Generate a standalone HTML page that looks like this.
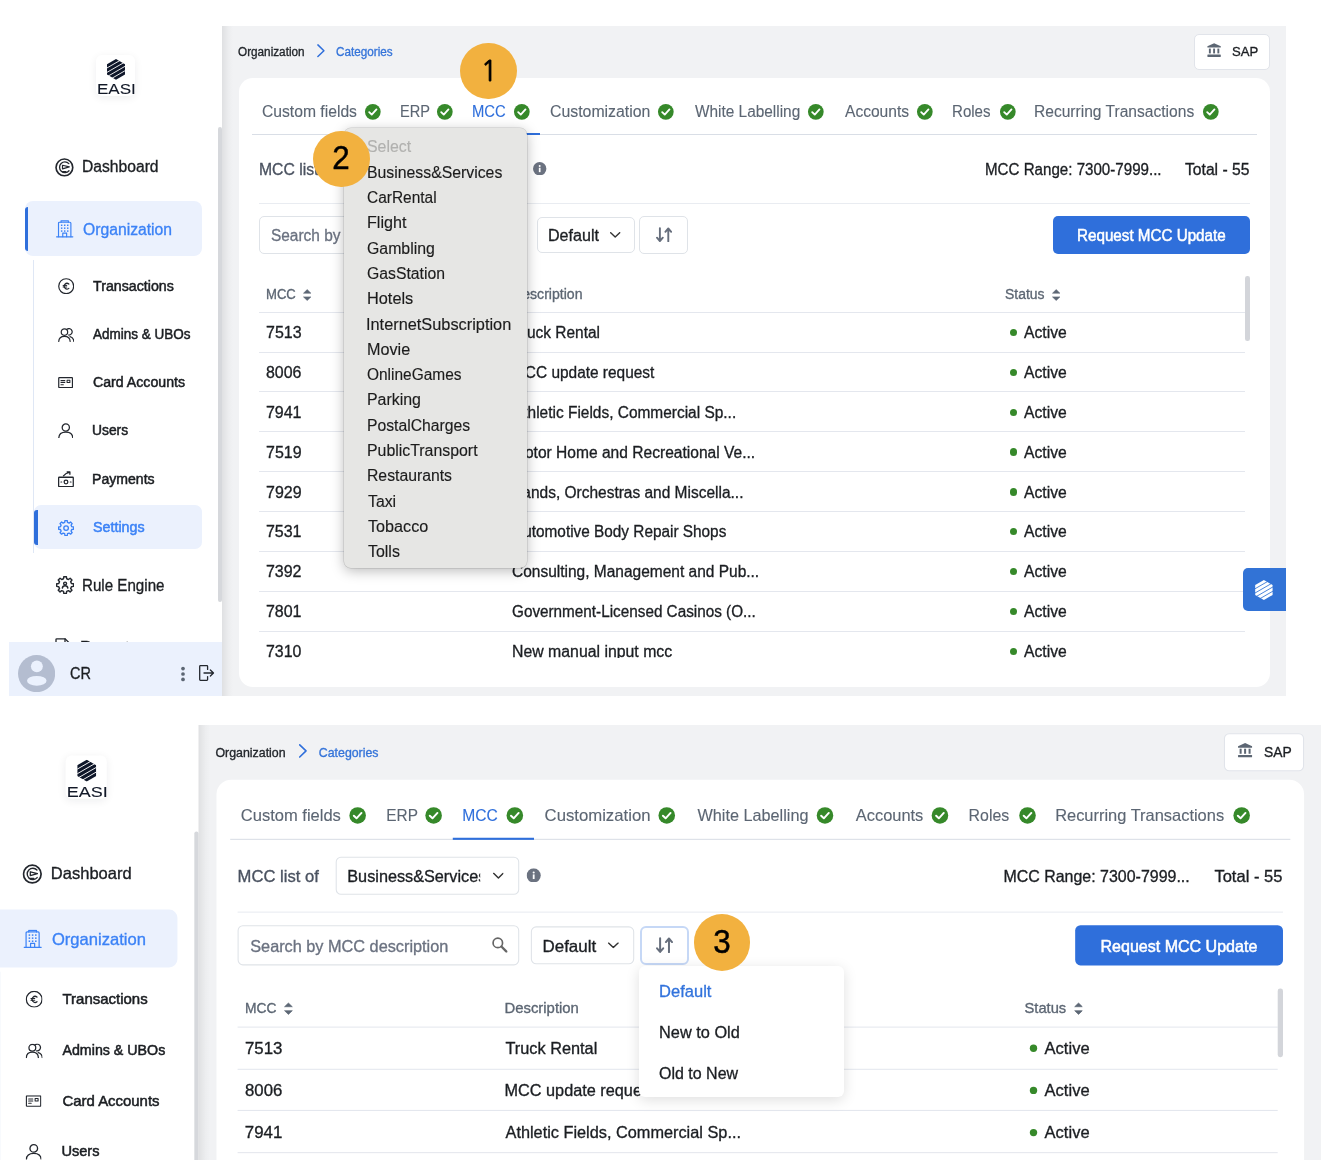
<!DOCTYPE html>
<html lang="en"><head><meta charset="utf-8"><title>MCC settings</title>
<style>
html,body{margin:0;padding:0;background:#fff;}
body{width:1324px;height:1160px;overflow:hidden;position:relative;font-family:"Liberation Sans",sans-serif;}
.b{position:absolute;display:block;}
.t{position:absolute;display:block;white-space:nowrap;transform-origin:0 50%;}
.scr{position:absolute;left:0;top:0;width:1324px;overflow:hidden;}
.in{position:absolute;left:0;top:0;width:1300px;height:700px;transform-origin:0 0;}
.scr{will-change:transform;}
</style></head><body>
<div class="scr" style="top:0;height:710px;"><div class="in">
<div class="b" style="left:222.30px;top:25.70px;width:1063.60px;height:670.00px;background:#f1f2f4;"></div>
<div class="b" style="left:222.30px;top:25.70px;width:10.70px;height:670.00px;background:linear-gradient(90deg,rgba(0,0,0,.075),rgba(0,0,0,.02) 60%,rgba(0,0,0,0));"></div>
<div class="b" style="left:217.60px;top:127.00px;width:4.20px;height:475.00px;background:#d6d8dc;border-radius:2px;"></div>
<div class="b" style="left:96.30px;top:55.00px;width:38.40px;height:41.20px;background:#fff;border-radius:6px;box-shadow:0 2px 8px rgba(15,23,42,.07);"></div>
<svg class="b" style="left:106.70px;top:58.85px;" width="18.00" height="20.70" viewBox="0 0 18 20.7"><polygon points="9,0 18,5.2 18,15.5 9,20.7 0,15.5 0,5.2" fill="#0f172a"/><line x1="-2" y1="10.11" x2="20" y2="-2.61" stroke="#fff" stroke-width="0.9"/><line x1="-2" y1="14.51" x2="20" y2="1.79" stroke="#fff" stroke-width="0.9"/><line x1="-2" y1="18.91" x2="20" y2="6.19" stroke="#fff" stroke-width="0.9"/><line x1="-2" y1="23.31" x2="20" y2="10.59" stroke="#fff" stroke-width="0.9"/></svg>
<span class="t" style="left:96.54px;top:78.77px;font-size:14px;line-height:21px;color:#111827;-webkit-text-stroke:0.1px #111827;transform:scaleX(1.2167);">EASI</span>
<span class="t" style="left:82.15px;top:155.09px;font-size:16px;line-height:24px;color:#1b1e22;-webkit-text-stroke:0.32px #1b1e22;transform:scaleX(0.9781);">Dashboard</span>
<div class="b" style="left:24.80px;top:201.20px;width:176.90px;height:54.40px;background:#ebf1fd;border-radius:8px;"></div>
<div class="b" style="left:24.80px;top:207.00px;width:3.60px;height:43.50px;background:#2f6fdb;border-radius:3px 0 0 3px;"></div>
<span class="t" style="left:83.19px;top:217.79px;font-size:16px;line-height:24px;color:#3b82f6;-webkit-text-stroke:0.32px #3b82f6;transform:scaleX(0.9820);">Organization</span>
<div class="b" style="left:33.00px;top:259.60px;width:1.40px;height:293.10px;background:#dfe7f5;"></div>
<span class="t" style="left:93.02px;top:275.97px;font-size:14px;line-height:21px;color:#1b1e22;-webkit-text-stroke:0.5px #1b1e22;transform:scaleX(1.0145);">Transactions</span>
<span class="t" style="left:93.30px;top:324.47px;font-size:14px;line-height:21px;color:#1b1e22;-webkit-text-stroke:0.5px #1b1e22;transform:scaleX(0.9636);">Admins &amp; UBOs</span>
<span class="t" style="left:92.59px;top:372.47px;font-size:14px;line-height:21px;color:#1b1e22;-webkit-text-stroke:0.5px #1b1e22;transform:scaleX(1.0106);">Card Accounts</span>
<span class="t" style="left:92.26px;top:420.07px;font-size:14px;line-height:21px;color:#1b1e22;-webkit-text-stroke:0.5px #1b1e22;transform:scaleX(0.9876);">Users</span>
<span class="t" style="left:92.17px;top:469.47px;font-size:14px;line-height:21px;color:#1b1e22;-webkit-text-stroke:0.5px #1b1e22;transform:scaleX(1.0057);">Payments</span>
<div class="b" style="left:34.40px;top:505.00px;width:167.30px;height:44.10px;background:#ebf1fd;border-radius:7px;"></div>
<div class="b" style="left:34.40px;top:509.80px;width:3.60px;height:35.00px;background:#2f6fdb;border-radius:3px 0 0 3px;"></div>
<span class="t" style="left:93.06px;top:517.47px;font-size:14px;line-height:21px;color:#3b82f6;-webkit-text-stroke:0.5px #3b82f6;transform:scaleX(1.0191);">Settings</span>
<span class="t" style="left:82.19px;top:573.59px;font-size:16px;line-height:24px;color:#1b1e22;-webkit-text-stroke:0.32px #1b1e22;transform:scaleX(0.9460);">Rule Engine</span>
<span class="t" style="left:80.48px;top:636.39px;font-size:16px;line-height:24px;color:#1b1e22;-webkit-text-stroke:0.32px #1b1e22;transform:scaleX(1.0332);">Reports</span>
<svg class="b" style="left:55.20px;top:157.80px;" width="18.80" height="18.80" viewBox="0 0 20 20"><g fill="none" stroke="#23272e" stroke-width="1.3" stroke-linecap="round" stroke-linejoin="round"><circle cx="10" cy="10" r="8.9" stroke-width="1.75"/><path d="M14.7 6.0 A5.7 5.7 0 1 0 14.9 13.6" stroke-width="1.4"/><path d="M8 7.7 L15.2 9.5 L8 11.6 Z" stroke-width="1.3"/><path d="M8 14.5 H11.6" stroke-width="1.3"/></g></svg>
<svg class="b" style="left:56.20px;top:220.40px;" width="17.40" height="17.60" viewBox="0 0 18 18"><g fill="none" stroke="#3b82f6" stroke-width="1.2" stroke-linecap="round" stroke-linejoin="round"><path d="M0.6 17.3 H17.4"/><path d="M2.6 17.2 V3.2 Q2.6 2.2 3.6 2.2 H14.4 Q15.4 2.2 15.4 3.2 V17.2"/><path d="M5.2 2.2 V0.8 H12.8 V2.2"/><path d="M7 17.2 V13.4 H11 V17.2"/></g><g fill="#3b82f6"><rect x="5.1" y="4.6" width="1.5" height="1.5"/><rect x="8.25" y="4.6" width="1.5" height="1.5"/><rect x="11.4" y="4.6" width="1.5" height="1.5"/><rect x="5.1" y="7.6" width="1.5" height="1.5"/><rect x="8.25" y="7.6" width="1.5" height="1.5"/><rect x="11.4" y="7.6" width="1.5" height="1.5"/><rect x="5.1" y="10.6" width="1.5" height="1.5"/><rect x="8.25" y="10.6" width="1.5" height="1.5"/><rect x="11.4" y="10.6" width="1.5" height="1.5"/></g></svg>
<svg class="b" style="left:57.50px;top:278.00px;" width="16.40" height="16.40" viewBox="0 0 18 18"><g fill="none" stroke="#23272e" stroke-width="1.3" stroke-linecap="round" stroke-linejoin="round"><circle cx="9" cy="9" r="8.2"/><path d="M11.9 6.6 A3.1 3.1 0 1 0 11.9 11.4" stroke-width="1.35"/><path d="M5.6 8.2 H9.6 M5.6 9.9 H9.6" stroke-width="1.05"/></g></svg>
<svg class="b" style="left:57.50px;top:327.60px;" width="16.60" height="14.20" viewBox="0 0 18 15.4"><g fill="none" stroke="#23272e" stroke-width="1.3" stroke-linecap="round" stroke-linejoin="round"><circle cx="7" cy="4.4" r="3.5"/><path d="M0.8 14.6 Q1 9 7 9 Q13 9 13.2 14.6"/><path d="M9.8 1.3 A3.5 3.5 0 1 1 11.4 7.6"/><path d="M13 9.4 Q16.9 10.4 17.2 14.6"/></g></svg>
<svg class="b" style="left:57.90px;top:376.90px;" width="15.20" height="11.20" viewBox="0 0 16 12"><g fill="none" stroke="#23272e" stroke-width="1.3" stroke-linecap="round" stroke-linejoin="round"><rect x="0.65" y="0.65" width="14.7" height="10.7" rx="0.6"/><path d="M3 3.9 H7.2 M3 6 H7.2 M3 8.2 H5.6" stroke-width="1.1"/><rect x="9.6" y="3.4" width="3" height="2.6" stroke-width="1.1"/></g></svg>
<svg class="b" style="left:57.90px;top:422.80px;" width="15.60" height="15.60" viewBox="0 0 16 16"><g fill="none" stroke="#23272e" stroke-width="1.3" stroke-linecap="round" stroke-linejoin="round"><circle cx="8" cy="4.6" r="3.7"/><path d="M0.8 15.4 Q1 9.4 8 9.4 Q15 9.4 15.2 15.4"/></g></svg>
<svg class="b" style="left:58.00px;top:471.00px;" width="16.00" height="16.40" viewBox="0 0 16.4 16.8"><g fill="none" stroke="#23272e" stroke-width="1.3" stroke-linecap="round" stroke-linejoin="round"><rect x="0.65" y="6.4" width="15" height="9.6" rx="0.6"/><circle cx="8.2" cy="11.2" r="1.9"/><path d="M3 11.2 H3.8 M12.6 11.2 H13.4" stroke-width="1.1"/><path d="M5.6 5 Q8 2 11.8 1.4 M9.4 0.8 H12.2 V3.4"/></g></svg>
<svg class="b" style="left:57.90px;top:519.70px;" width="16.20" height="16.20" viewBox="0 0 24 24"><g fill="none" stroke="#3b82f6" stroke-width="2.00" stroke-linecap="round" stroke-linejoin="round"><path d="M10.33 0.92 L13.67 0.92 L14.07 3.65 L16.44 4.63 L18.65 2.99 L21.01 5.35 L19.37 7.56 L20.35 9.93 L23.08 10.33 L23.08 13.67 L20.35 14.07 L19.37 16.44 L21.01 18.65 L18.65 21.01 L16.44 19.37 L14.07 20.35 L13.67 23.08 L10.33 23.08 L9.93 20.35 L7.56 19.37 L5.35 21.01 L2.99 18.65 L4.63 16.44 L3.65 14.07 L0.92 13.67 L0.92 10.33 L3.65 9.93 L4.63 7.56 L2.99 5.35 L5.35 2.99 L7.56 4.63 L9.93 3.65 Z"/><circle cx="12" cy="12" r="3.4"/></g></svg>
<svg class="b" style="left:55.80px;top:575.80px;" width="18.20" height="18.20" viewBox="0 0 24 24"><g fill="none" stroke="#23272e" stroke-width="1.91" stroke-linecap="round" stroke-linejoin="round"><path d="M10.33 0.92 L13.67 0.92 L14.07 3.65 L16.44 4.63 L18.65 2.99 L21.01 5.35 L19.37 7.56 L20.35 9.93 L23.08 10.33 L23.08 13.67 L20.35 14.07 L19.37 16.44 L21.01 18.65 L18.65 21.01 L16.44 19.37 L14.07 20.35 L13.67 23.08 L10.33 23.08 L9.93 20.35 L7.56 19.37 L5.35 21.01 L2.99 18.65 L4.63 16.44 L3.65 14.07 L0.92 13.67 L0.92 10.33 L3.65 9.93 L4.63 7.56 L2.99 5.35 L5.35 2.99 L7.56 4.63 L9.93 3.65 Z"/><circle cx="12" cy="10" r="1.9"/><path d="M8.4 16 Q8.6 12.9 12 12.9 Q15.4 12.9 15.6 16"/></g></svg>
<svg class="b" style="left:55.30px;top:638.30px;" width="16.00" height="18.00" viewBox="0 0 16 18"><g fill="none" stroke="#23272e" stroke-width="1.3" stroke-linecap="round" stroke-linejoin="round"><path d="M1 17 V1.6 Q1 0.8 1.8 0.8 H10 L15 5.6 V17 Z"/><path d="M10 0.8 V5.6 H15"/></g></svg>
<div class="b" style="left:9.00px;top:642.00px;width:213.30px;height:53.70px;background:#ebf1fd;"></div>
<svg class="b" style="left:17.70px;top:654.70px;" width="37.20" height="37.20" viewBox="0 0 40 40"><defs><clipPath id="avc"><circle cx="20" cy="20" r="20"/></clipPath></defs><circle cx="20" cy="20" r="20" fill="#b4bdd0"/><g clip-path="url(#avc)" fill="#ebf1fd"><circle cx="20.3" cy="12.2" r="6.4"/><ellipse cx="20.2" cy="27.8" rx="10.5" ry="5.3"/></g></svg>
<span class="t" style="left:69.97px;top:662.29px;font-size:16px;line-height:24px;color:#1b1e22;-webkit-text-stroke:0.32px #1b1e22;transform:scaleX(0.9074);">CR</span>
<svg class="b" style="left:180.50px;top:665.50px;" width="4.00" height="16.00" viewBox="0 0 4 16"><circle cx="2" cy="2.6" r="1.85" fill="#5c6673"/><circle cx="2" cy="8" r="1.85" fill="#5c6673"/><circle cx="2" cy="13.4" r="1.85" fill="#5c6673"/></svg>
<svg class="b" style="left:199.20px;top:665.40px;" width="15.40" height="16.00" viewBox="0 0 15.4 16"><g fill="none" stroke="#23272e" stroke-width="1.3" stroke-linejoin="round" stroke-linecap="round"><path d="M8.6 4.4 V1.4 Q8.6 0.7 7.9 0.7 H1.4 Q0.7 0.7 0.7 1.4 V14.6 Q0.7 15.3 1.4 15.3 H7.9 Q8.6 15.3 8.6 14.6 V11.6"/><path d="M5 8 H14.4 M11.4 5 L14.5 8 L11.4 11"/></g></svg>
<span class="t" style="left:238.47px;top:42.84px;font-size:12px;line-height:18px;color:#22262b;-webkit-text-stroke:0.32px #22262b;transform:scaleX(0.9783);">Organization</span>
<svg class="b" style="left:316.60px;top:44.20px;" width="8.00" height="13.40" viewBox="0 0 8 13.4"><path d="M0.9 0.9 L6.9 6.7 L0.9 12.5" fill="none" stroke="#2f6fdb" stroke-width="1.5" stroke-linecap="round" stroke-linejoin="round"/></svg>
<span class="t" style="left:335.71px;top:42.84px;font-size:12px;line-height:18px;color:#3574d9;-webkit-text-stroke:0.32px #3574d9;transform:scaleX(0.9754);">Categories</span>
<div class="b" style="left:1194.00px;top:34.20px;width:75.60px;height:35.60px;background:#fff;border:1px solid #e1e4ea;border-radius:5px;box-sizing:border-box;"></div>
<svg class="b" style="left:1207.00px;top:43.30px;" width="14.20" height="14.20" viewBox="0 0 14.2 14.2"><g fill="#5c6673"><path d="M7.1 0.2 L13.8 3.2 V4.6 H0.4 V3.2 Z"/><rect x="1.9" y="5.6" width="1.9" height="4.8"/><rect x="6.15" y="5.6" width="1.9" height="4.8"/><rect x="10.4" y="5.6" width="1.9" height="4.8"/><rect x="0.4" y="11.6" width="13.4" height="2.3" rx="0.4"/></g></svg>
<span class="t" style="left:1231.51px;top:42.26px;font-size:13.5px;line-height:20px;color:#1b1e22;-webkit-text-stroke:0.32px #1b1e22;transform:scaleX(0.9721);">SAP</span>
<div class="b" style="left:239.40px;top:77.70px;width:1030.90px;height:609.60px;background:#fff;border-radius:14px;"></div>
<span class="t" style="left:261.52px;top:99.99px;font-size:16px;line-height:24px;color:#5c6673;-webkit-text-stroke:0.12px #5c6673;transform:scaleX(0.9795);">Custom fields</span>
<svg class="b" style="left:364.47px;top:102.57px;" width="17.66" height="17.66" viewBox="-1 -1 18 18"><circle cx="8" cy="8" r="8" fill="#36892a"/><path d="M4.3 8.3 L6.9 10.8 L11.7 5.6" fill="none" stroke="#fff" stroke-width="1.9" stroke-linecap="round" stroke-linejoin="round"/></svg>
<span class="t" style="left:399.83px;top:99.99px;font-size:16px;line-height:24px;color:#5c6673;-webkit-text-stroke:0.12px #5c6673;transform:scaleX(0.9123);">ERP</span>
<svg class="b" style="left:436.47px;top:102.57px;" width="17.66" height="17.66" viewBox="-1 -1 18 18"><circle cx="8" cy="8" r="8" fill="#36892a"/><path d="M4.3 8.3 L6.9 10.8 L11.7 5.6" fill="none" stroke="#fff" stroke-width="1.9" stroke-linecap="round" stroke-linejoin="round"/></svg>
<span class="t" style="left:472.21px;top:99.99px;font-size:16px;line-height:24px;color:#2f6fdb;-webkit-text-stroke:0.12px #2f6fdb;transform:scaleX(0.9259);">MCC</span>
<svg class="b" style="left:513.17px;top:102.57px;" width="17.66" height="17.66" viewBox="-1 -1 18 18"><circle cx="8" cy="8" r="8" fill="#36892a"/><path d="M4.3 8.3 L6.9 10.8 L11.7 5.6" fill="none" stroke="#fff" stroke-width="1.9" stroke-linecap="round" stroke-linejoin="round"/></svg>
<span class="t" style="left:550.01px;top:99.99px;font-size:16px;line-height:24px;color:#5c6673;-webkit-text-stroke:0.12px #5c6673;transform:scaleX(0.9904);">Customization</span>
<svg class="b" style="left:657.37px;top:102.57px;" width="17.66" height="17.66" viewBox="-1 -1 18 18"><circle cx="8" cy="8" r="8" fill="#36892a"/><path d="M4.3 8.3 L6.9 10.8 L11.7 5.6" fill="none" stroke="#fff" stroke-width="1.9" stroke-linecap="round" stroke-linejoin="round"/></svg>
<span class="t" style="left:694.66px;top:99.99px;font-size:16px;line-height:24px;color:#5c6673;-webkit-text-stroke:0.12px #5c6673;transform:scaleX(0.9616);">White Labelling</span>
<svg class="b" style="left:807.17px;top:102.57px;" width="17.66" height="17.66" viewBox="-1 -1 18 18"><circle cx="8" cy="8" r="8" fill="#36892a"/><path d="M4.3 8.3 L6.9 10.8 L11.7 5.6" fill="none" stroke="#fff" stroke-width="1.9" stroke-linecap="round" stroke-linejoin="round"/></svg>
<span class="t" style="left:844.50px;top:99.99px;font-size:16px;line-height:24px;color:#5c6673;-webkit-text-stroke:0.12px #5c6673;transform:scaleX(0.9733);">Accounts</span>
<svg class="b" style="left:916.17px;top:102.57px;" width="17.66" height="17.66" viewBox="-1 -1 18 18"><circle cx="8" cy="8" r="8" fill="#36892a"/><path d="M4.3 8.3 L6.9 10.8 L11.7 5.6" fill="none" stroke="#fff" stroke-width="1.9" stroke-linecap="round" stroke-linejoin="round"/></svg>
<span class="t" style="left:952.49px;top:99.99px;font-size:16px;line-height:24px;color:#5c6673;-webkit-text-stroke:0.12px #5c6673;transform:scaleX(0.9417);">Roles</span>
<svg class="b" style="left:998.77px;top:102.57px;" width="17.66" height="17.66" viewBox="-1 -1 18 18"><circle cx="8" cy="8" r="8" fill="#36892a"/><path d="M4.3 8.3 L6.9 10.8 L11.7 5.6" fill="none" stroke="#fff" stroke-width="1.9" stroke-linecap="round" stroke-linejoin="round"/></svg>
<span class="t" style="left:1033.55px;top:99.99px;font-size:16px;line-height:24px;color:#5c6673;-webkit-text-stroke:0.12px #5c6673;transform:scaleX(0.9737);">Recurring Transactions</span>
<svg class="b" style="left:1201.67px;top:102.57px;" width="17.66" height="17.66" viewBox="-1 -1 18 18"><circle cx="8" cy="8" r="8" fill="#36892a"/><path d="M4.3 8.3 L6.9 10.8 L11.7 5.6" fill="none" stroke="#fff" stroke-width="1.9" stroke-linecap="round" stroke-linejoin="round"/></svg>
<div class="b" style="left:252.00px;top:133.50px;width:1005.30px;height:1.10px;background:#d9dee6;"></div>
<div class="b" style="left:462.70px;top:132.90px;width:77.30px;height:2.00px;background:#2f6fdb;"></div>
<span class="t" style="left:258.54px;top:157.69px;font-size:16px;line-height:24px;color:#4a5260;-webkit-text-stroke:0.32px #4a5260;transform:scaleX(0.9844);">MCC list of</span>
<div class="b" style="left:351.70px;top:151.20px;width:174.50px;height:36.10px;background:#fff;border:1px solid #dfe3e8;border-radius:5px;box-sizing:border-box;"></div>
<div class="b" style="left:361.5px;top:156px;width:127.3px;height:26px;overflow:hidden;"><span class="t" style="left:1.77px;top:1.69px;font-size:16px;line-height:24px;color:#1b1e22;-webkit-text-stroke:0.32px #1b1e22;transform:scaleX(0.9621);">Business&amp;Services</span></div>
<svg class="b" style="left:500.80px;top:166.41px;" width="10.50" height="5.78" viewBox="0 0 10.50 5.78"><path d="M0.7 0.7 L5.25 5.08 L9.80 0.7" fill="none" stroke="#333" stroke-width="1.4" stroke-linecap="round" stroke-linejoin="round"/></svg>
<svg class="b" style="left:533.20px;top:162.00px;" width="13.40" height="13.40" viewBox="0 0 14 14"><circle cx="7" cy="7" r="7" fill="#6b7280"/><rect x="6.1" y="6" width="1.8" height="4.6" fill="#fff"/><circle cx="7" cy="4.1" r="1.05" fill="#fff"/></svg>
<span class="t" style="left:984.99px;top:157.69px;font-size:16px;line-height:24px;color:#1b1e22;-webkit-text-stroke:0.32px #1b1e22;transform:scaleX(0.9454);">MCC Range: 7300-7999...</span>
<span class="t" style="left:1185.29px;top:157.69px;font-size:16px;line-height:24px;color:#1b1e22;-webkit-text-stroke:0.32px #1b1e22;transform:scaleX(0.9793);">Total - 55</span>
<div class="b" style="left:259.40px;top:203.00px;width:990.20px;height:1.00px;background:#e9ecf1;"></div>
<div class="b" style="left:259.40px;top:215.50px;width:267.10px;height:38.80px;background:#fff;border:1px solid #dfe3e8;border-radius:5px;box-sizing:border-box;"></div>
<span class="t" style="left:271.31px;top:223.79px;font-size:16px;line-height:24px;color:#6b7280;-webkit-text-stroke:0.32px #6b7280;transform:scaleX(0.9642);">Search by MCC description</span>
<svg class="b" style="left:500.00px;top:227.20px;" width="15.20" height="15.20" viewBox="0 0 15.2 15.2"><circle cx="5.7" cy="5.7" r="4.5" fill="none" stroke="#666" stroke-width="1.6"/><path d="M9.1 9.1 L13.9 13.9" stroke="#666" stroke-width="2.2" stroke-linecap="round"/></svg>
<div class="b" style="left:536.90px;top:216.80px;width:98.40px;height:36.60px;background:#fff;border:1px solid #dfe3e8;border-radius:5px;box-sizing:border-box;"></div>
<span class="t" style="left:548.11px;top:223.79px;font-size:16px;line-height:24px;color:#1b1e22;-webkit-text-stroke:0.32px #1b1e22;transform:scaleX(1.0057);">Default</span>
<svg class="b" style="left:610.20px;top:232.44px;" width="10.40" height="5.72" viewBox="0 0 10.40 5.72"><path d="M0.7 0.7 L5.20 5.02 L9.70 0.7" fill="none" stroke="#333" stroke-width="1.4" stroke-linecap="round" stroke-linejoin="round"/></svg>
<div class="b" style="left:639.30px;top:215.50px;width:48.40px;height:38.90px;background:#fff;border:1px solid #dfe3e8;border-radius:5px;box-sizing:border-box;"></div>
<svg class="b" style="left:655.90px;top:226.75px;" width="16.20" height="15.50" viewBox="0 0 16.2 15.5"><g fill="none" stroke="#666e7c" stroke-width="1.9" stroke-linecap="round" stroke-linejoin="round"><path d="M3.9 1.1 V13.4 M1.0 10.7 L3.9 14.1 L6.8 10.7"/><path d="M12.3 14.4 V2.1 M9.4 4.8 L12.3 1.4 L15.2 4.8"/></g></svg>
<div class="b" style="left:1053.00px;top:215.50px;width:196.60px;height:38.70px;background:#2f6fdb;border-radius:5px;"></div>
<span class="t" style="left:1077.18px;top:223.69px;font-size:16px;line-height:24px;color:#fff;-webkit-text-stroke:0.5px #fff;transform:scaleX(0.9498);">Request MCC Update</span>
<div class="b" style="left:0;top:0;width:1290px;height:657.5px;overflow:hidden;"><span class="t" style="left:265.85px;top:283.87px;font-size:14px;line-height:21px;color:#5c6673;-webkit-text-stroke:0.32px #5c6673;transform:scaleX(0.9358);">MCC</span>
<svg class="b" style="left:303.20px;top:289.00px;" width="8.40" height="12.00" viewBox="0 0 8.4 12"><path d="M4.2 0.6 L7.9 4.2 H0.5 Z M0.5 7.9 H7.9 L4.2 11.5 Z" fill="#5d6775" stroke="#5d6775" stroke-width="0.6" stroke-linejoin="round"/></svg>
<span class="t" style="left:511.87px;top:283.87px;font-size:14px;line-height:21px;color:#5c6673;-webkit-text-stroke:0.32px #5c6673;transform:scaleX(1.0073);">Description</span>
<span class="t" style="left:1004.97px;top:283.87px;font-size:14px;line-height:21px;color:#5c6673;-webkit-text-stroke:0.32px #5c6673;transform:scaleX(0.9956);">Status</span>
<svg class="b" style="left:1052.00px;top:289.00px;" width="8.40" height="12.00" viewBox="0 0 8.4 12"><path d="M4.2 0.6 L7.9 4.2 H0.5 Z M0.5 7.9 H7.9 L4.2 11.5 Z" fill="#5d6775" stroke="#5d6775" stroke-width="0.6" stroke-linejoin="round"/></svg>
<div class="b" style="left:259.40px;top:311.55px;width:985.30px;height:1.10px;background:#e4e7ee;"></div>
<div class="b" style="left:259.40px;top:351.65px;width:985.30px;height:1.10px;background:#e4e7ee;"></div>
<div class="b" style="left:259.40px;top:391.25px;width:985.30px;height:1.10px;background:#e4e7ee;"></div>
<div class="b" style="left:259.40px;top:431.05px;width:985.30px;height:1.10px;background:#e4e7ee;"></div>
<div class="b" style="left:259.40px;top:470.75px;width:985.30px;height:1.10px;background:#e4e7ee;"></div>
<div class="b" style="left:259.40px;top:510.95px;width:985.30px;height:1.10px;background:#e4e7ee;"></div>
<div class="b" style="left:259.40px;top:550.85px;width:985.30px;height:1.10px;background:#e4e7ee;"></div>
<div class="b" style="left:259.40px;top:590.95px;width:985.30px;height:1.10px;background:#e4e7ee;"></div>
<div class="b" style="left:259.40px;top:630.75px;width:985.30px;height:1.10px;background:#e4e7ee;"></div>
<span class="t" style="left:265.90px;top:321.19px;font-size:16px;line-height:24px;color:#1b1e22;-webkit-text-stroke:0.32px #1b1e22;transform:scaleX(0.9977);">7513</span>
<span class="t" style="left:512.69px;top:321.19px;font-size:16px;line-height:24px;color:#1b1e22;-webkit-text-stroke:0.32px #1b1e22;transform:scaleX(0.9655);">Truck Rental</span>
<div class="b" style="left:1009.50px;top:328.80px;width:7.40px;height:7.40px;background:#36892a;border-radius:50%;"></div>
<span class="t" style="left:1023.60px;top:321.19px;font-size:16px;line-height:24px;color:#1b1e22;-webkit-text-stroke:0.32px #1b1e22;transform:scaleX(0.9795);">Active</span>
<span class="t" style="left:266.02px;top:361.04px;font-size:16px;line-height:24px;color:#1b1e22;-webkit-text-stroke:0.32px #1b1e22;transform:scaleX(0.9942);">8006</span>
<span class="t" style="left:511.77px;top:361.04px;font-size:16px;line-height:24px;color:#1b1e22;-webkit-text-stroke:0.32px #1b1e22;transform:scaleX(0.9639);">MCC update request</span>
<div class="b" style="left:1009.50px;top:368.65px;width:7.40px;height:7.40px;background:#36892a;border-radius:50%;"></div>
<span class="t" style="left:1023.60px;top:361.04px;font-size:16px;line-height:24px;color:#1b1e22;-webkit-text-stroke:0.32px #1b1e22;transform:scaleX(0.9795);">Active</span>
<span class="t" style="left:265.90px;top:400.89px;font-size:16px;line-height:24px;color:#1b1e22;-webkit-text-stroke:0.32px #1b1e22;transform:scaleX(1.0000);">7941</span>
<span class="t" style="left:513.00px;top:400.89px;font-size:16px;line-height:24px;color:#1b1e22;-webkit-text-stroke:0.32px #1b1e22;transform:scaleX(0.9654);">Athletic Fields, Commercial Sp...</span>
<div class="b" style="left:1009.50px;top:408.50px;width:7.40px;height:7.40px;background:#36892a;border-radius:50%;"></div>
<span class="t" style="left:1023.60px;top:400.89px;font-size:16px;line-height:24px;color:#1b1e22;-webkit-text-stroke:0.32px #1b1e22;transform:scaleX(0.9795);">Active</span>
<span class="t" style="left:265.90px;top:440.74px;font-size:16px;line-height:24px;color:#1b1e22;-webkit-text-stroke:0.32px #1b1e22;transform:scaleX(0.9988);">7519</span>
<span class="t" style="left:511.75px;top:440.74px;font-size:16px;line-height:24px;color:#1b1e22;-webkit-text-stroke:0.32px #1b1e22;transform:scaleX(0.9729);">Motor Home and Recreational Ve...</span>
<div class="b" style="left:1009.50px;top:448.35px;width:7.40px;height:7.40px;background:#36892a;border-radius:50%;"></div>
<span class="t" style="left:1023.60px;top:440.74px;font-size:16px;line-height:24px;color:#1b1e22;-webkit-text-stroke:0.32px #1b1e22;transform:scaleX(0.9795);">Active</span>
<span class="t" style="left:265.90px;top:480.59px;font-size:16px;line-height:24px;color:#1b1e22;-webkit-text-stroke:0.32px #1b1e22;transform:scaleX(0.9988);">7929</span>
<span class="t" style="left:511.76px;top:480.59px;font-size:16px;line-height:24px;color:#1b1e22;-webkit-text-stroke:0.32px #1b1e22;transform:scaleX(0.9675);">Bands, Orchestras and Miscella...</span>
<div class="b" style="left:1009.50px;top:488.20px;width:7.40px;height:7.40px;background:#36892a;border-radius:50%;"></div>
<span class="t" style="left:1023.60px;top:480.59px;font-size:16px;line-height:24px;color:#1b1e22;-webkit-text-stroke:0.32px #1b1e22;transform:scaleX(0.9795);">Active</span>
<span class="t" style="left:265.90px;top:520.44px;font-size:16px;line-height:24px;color:#1b1e22;-webkit-text-stroke:0.32px #1b1e22;transform:scaleX(1.0000);">7531</span>
<span class="t" style="left:513.00px;top:520.44px;font-size:16px;line-height:24px;color:#1b1e22;-webkit-text-stroke:0.32px #1b1e22;transform:scaleX(0.9594);">Automotive Body Repair Shops</span>
<div class="b" style="left:1009.50px;top:528.05px;width:7.40px;height:7.40px;background:#36892a;border-radius:50%;"></div>
<span class="t" style="left:1023.60px;top:520.44px;font-size:16px;line-height:24px;color:#1b1e22;-webkit-text-stroke:0.32px #1b1e22;transform:scaleX(0.9795);">Active</span>
<span class="t" style="left:265.90px;top:560.29px;font-size:16px;line-height:24px;color:#1b1e22;-webkit-text-stroke:0.32px #1b1e22;transform:scaleX(1.0000);">7392</span>
<span class="t" style="left:512.23px;top:560.29px;font-size:16px;line-height:24px;color:#1b1e22;-webkit-text-stroke:0.32px #1b1e22;transform:scaleX(0.9682);">Consulting, Management and Pub...</span>
<div class="b" style="left:1009.50px;top:567.90px;width:7.40px;height:7.40px;background:#36892a;border-radius:50%;"></div>
<span class="t" style="left:1023.60px;top:560.29px;font-size:16px;line-height:24px;color:#1b1e22;-webkit-text-stroke:0.32px #1b1e22;transform:scaleX(0.9795);">Active</span>
<span class="t" style="left:265.90px;top:600.14px;font-size:16px;line-height:24px;color:#1b1e22;-webkit-text-stroke:0.32px #1b1e22;transform:scaleX(1.0000);">7801</span>
<span class="t" style="left:512.24px;top:600.14px;font-size:16px;line-height:24px;color:#1b1e22;-webkit-text-stroke:0.32px #1b1e22;transform:scaleX(0.9553);">Government-Licensed Casinos (O...</span>
<div class="b" style="left:1009.50px;top:607.75px;width:7.40px;height:7.40px;background:#36892a;border-radius:50%;"></div>
<span class="t" style="left:1023.60px;top:600.14px;font-size:16px;line-height:24px;color:#1b1e22;-webkit-text-stroke:0.32px #1b1e22;transform:scaleX(0.9795);">Active</span>
<span class="t" style="left:265.90px;top:639.99px;font-size:16px;line-height:24px;color:#1b1e22;-webkit-text-stroke:0.32px #1b1e22;transform:scaleX(0.9953);">7310</span>
<span class="t" style="left:511.73px;top:639.99px;font-size:16px;line-height:24px;color:#1b1e22;-webkit-text-stroke:0.32px #1b1e22;transform:scaleX(0.9896);">New manual input mcc</span>
<div class="b" style="left:1009.50px;top:647.60px;width:7.40px;height:7.40px;background:#36892a;border-radius:50%;"></div>
<span class="t" style="left:1023.60px;top:639.99px;font-size:16px;line-height:24px;color:#1b1e22;-webkit-text-stroke:0.32px #1b1e22;transform:scaleX(0.9795);">Active</span>
<div class="b" style="left:1245.00px;top:276.00px;width:4.60px;height:65.00px;background:#d3d5da;border-radius:2.3px;"></div></div>
<div class="b" style="left:1242.90px;top:567.90px;width:43.00px;height:42.90px;background:#3273d6;border-radius:5px 0 0 5px;"></div>
<svg class="b" style="left:1255.20px;top:579.60px;" width="17.80" height="20.00" viewBox="0 0 18 20.7"><polygon points="9,0 18,5.2 18,15.5 9,20.7 0,15.5 0,5.2" fill="#fff"/><line x1="-2" y1="10.11" x2="20" y2="-2.61" stroke="#3273d6" stroke-width="0.9"/><line x1="-2" y1="14.51" x2="20" y2="1.79" stroke="#3273d6" stroke-width="0.9"/><line x1="-2" y1="18.91" x2="20" y2="6.19" stroke="#3273d6" stroke-width="0.9"/><line x1="-2" y1="23.31" x2="20" y2="10.59" stroke="#3273d6" stroke-width="0.9"/></svg>
</div>
<div class="b" style="left:344.00px;top:127.60px;width:183.30px;height:440.00px;background:#e6e6e4;border-radius:7px;box-shadow:0 0 0 0.5px rgba(0,0,0,.16),0 3px 13px rgba(0,0,0,.27);"></div>
<span class="t" style="left:367.18px;top:135.49px;font-size:16px;line-height:24px;color:#b1b1af;-webkit-text-stroke:0.15px #b1b1af;transform:scaleX(0.9936);">Select</span>
<span class="t" style="left:366.64px;top:160.78px;font-size:16px;line-height:24px;color:#1c1c1c;-webkit-text-stroke:0.15px #1c1c1c;transform:scaleX(0.9880);">Business&amp;Services</span>
<span class="t" style="left:367.13px;top:186.07px;font-size:16px;line-height:24px;color:#1c1c1c;-webkit-text-stroke:0.15px #1c1c1c;transform:scaleX(0.9672);">CarRental</span>
<span class="t" style="left:366.61px;top:211.36px;font-size:16px;line-height:24px;color:#1c1c1c;-webkit-text-stroke:0.15px #1c1c1c;transform:scaleX(1.0090);">Flight</span>
<span class="t" style="left:367.11px;top:236.65px;font-size:16px;line-height:24px;color:#1c1c1c;-webkit-text-stroke:0.15px #1c1c1c;transform:scaleX(0.9898);">Gambling</span>
<span class="t" style="left:367.11px;top:261.94px;font-size:16px;line-height:24px;color:#1c1c1c;-webkit-text-stroke:0.15px #1c1c1c;transform:scaleX(0.9850);">GasStation</span>
<span class="t" style="left:366.59px;top:287.23px;font-size:16px;line-height:24px;color:#1c1c1c;-webkit-text-stroke:0.15px #1c1c1c;transform:scaleX(1.0202);">Hotels</span>
<span class="t" style="left:366.43px;top:312.52px;font-size:16px;line-height:24px;color:#1c1c1c;-webkit-text-stroke:0.15px #1c1c1c;transform:scaleX(1.0205);">InternetSubscription</span>
<span class="t" style="left:366.60px;top:337.81px;font-size:16px;line-height:24px;color:#1c1c1c;-webkit-text-stroke:0.15px #1c1c1c;transform:scaleX(1.0118);">Movie</span>
<span class="t" style="left:367.20px;top:363.10px;font-size:16px;line-height:24px;color:#1c1c1c;-webkit-text-stroke:0.15px #1c1c1c;transform:scaleX(0.9662);">OnlineGames</span>
<span class="t" style="left:366.63px;top:388.39px;font-size:16px;line-height:24px;color:#1c1c1c;-webkit-text-stroke:0.15px #1c1c1c;transform:scaleX(0.9950);">Parking</span>
<span class="t" style="left:366.64px;top:413.68px;font-size:16px;line-height:24px;color:#1c1c1c;-webkit-text-stroke:0.15px #1c1c1c;transform:scaleX(0.9824);">PostalCharges</span>
<span class="t" style="left:366.63px;top:438.97px;font-size:16px;line-height:24px;color:#1c1c1c;-webkit-text-stroke:0.15px #1c1c1c;transform:scaleX(0.9920);">PublicTransport</span>
<span class="t" style="left:366.64px;top:464.26px;font-size:16px;line-height:24px;color:#1c1c1c;-webkit-text-stroke:0.15px #1c1c1c;transform:scaleX(0.9841);">Restaurants</span>
<span class="t" style="left:367.58px;top:489.55px;font-size:16px;line-height:24px;color:#1c1c1c;-webkit-text-stroke:0.15px #1c1c1c;transform:scaleX(0.9874);">Taxi</span>
<span class="t" style="left:367.58px;top:514.84px;font-size:16px;line-height:24px;color:#1c1c1c;-webkit-text-stroke:0.15px #1c1c1c;transform:scaleX(1.0102);">Tobacco</span>
<span class="t" style="left:367.58px;top:540.13px;font-size:16px;line-height:24px;color:#1c1c1c;-webkit-text-stroke:0.15px #1c1c1c;transform:scaleX(0.9961);">Tolls</span>
<div class="b" style="left:460.40px;top:43.00px;width:56.20px;height:56.20px;background:#f2b13f;border-radius:50%;"></div><span class="t" style="left:461.00px;top:43.40px;width:56.2px;text-align:center;font-size:27.8px;line-height:56.2px;color:#000;transform-origin:50% 50%;transform:scaleX(1.0);font-family:'NanumGothic','Liberation Sans',sans-serif;-webkit-text-stroke:0.8px #000;">1</span>
<div class="b" style="left:313.40px;top:130.60px;width:56.20px;height:56.20px;background:#f2b13f;border-radius:50%;"></div><span class="t" style="left:313.40px;top:129.70px;width:56.2px;text-align:center;font-size:33px;line-height:56.2px;color:#000;transform-origin:50% 50%;transform:scaleX(0.95);-webkit-text-stroke:0.45px #000;">2</span>
</div>
<div class="scr" style="top:725px;height:435px;"><div style="position:absolute;left:0;top:-725px;width:1324px;height:1160px;">
<div class="in" style="transform:translate(-35.64px,697.45px) scale(1.0549);">
<div class="b" style="left:222.30px;top:25.70px;width:1063.60px;height:670.00px;background:#f1f2f4;"></div>
<div class="b" style="left:222.30px;top:25.70px;width:10.70px;height:670.00px;background:linear-gradient(90deg,rgba(0,0,0,.075),rgba(0,0,0,.02) 60%,rgba(0,0,0,0));"></div>
<div class="b" style="left:217.60px;top:127.00px;width:4.20px;height:475.00px;background:#d6d8dc;border-radius:2px;"></div>
<div class="b" style="left:96.30px;top:55.00px;width:38.40px;height:41.20px;background:#fff;border-radius:6px;box-shadow:0 2px 8px rgba(15,23,42,.07);"></div>
<svg class="b" style="left:106.70px;top:58.85px;" width="18.00" height="20.70" viewBox="0 0 18 20.7"><polygon points="9,0 18,5.2 18,15.5 9,20.7 0,15.5 0,5.2" fill="#0f172a"/><line x1="-2" y1="10.11" x2="20" y2="-2.61" stroke="#fff" stroke-width="0.9"/><line x1="-2" y1="14.51" x2="20" y2="1.79" stroke="#fff" stroke-width="0.9"/><line x1="-2" y1="18.91" x2="20" y2="6.19" stroke="#fff" stroke-width="0.9"/><line x1="-2" y1="23.31" x2="20" y2="10.59" stroke="#fff" stroke-width="0.9"/></svg>
<span class="t" style="left:96.54px;top:78.77px;font-size:14px;line-height:21px;color:#111827;-webkit-text-stroke:0.1px #111827;transform:scaleX(1.2167);">EASI</span>
<span class="t" style="left:82.15px;top:155.09px;font-size:16px;line-height:24px;color:#1b1e22;-webkit-text-stroke:0.32px #1b1e22;transform:scaleX(0.9781);">Dashboard</span>
<div class="b" style="left:24.80px;top:201.20px;width:176.90px;height:54.40px;background:#ebf1fd;border-radius:8px;"></div>
<div class="b" style="left:24.80px;top:207.00px;width:3.60px;height:43.50px;background:#2f6fdb;border-radius:3px 0 0 3px;"></div>
<span class="t" style="left:83.19px;top:217.79px;font-size:16px;line-height:24px;color:#3b82f6;-webkit-text-stroke:0.32px #3b82f6;transform:scaleX(0.9820);">Organization</span>
<div class="b" style="left:33.00px;top:259.60px;width:1.40px;height:293.10px;background:#dfe7f5;"></div>
<span class="t" style="left:93.02px;top:275.97px;font-size:14px;line-height:21px;color:#1b1e22;-webkit-text-stroke:0.5px #1b1e22;transform:scaleX(1.0145);">Transactions</span>
<span class="t" style="left:93.30px;top:324.47px;font-size:14px;line-height:21px;color:#1b1e22;-webkit-text-stroke:0.5px #1b1e22;transform:scaleX(0.9636);">Admins &amp; UBOs</span>
<span class="t" style="left:92.59px;top:372.47px;font-size:14px;line-height:21px;color:#1b1e22;-webkit-text-stroke:0.5px #1b1e22;transform:scaleX(1.0106);">Card Accounts</span>
<span class="t" style="left:92.26px;top:420.07px;font-size:14px;line-height:21px;color:#1b1e22;-webkit-text-stroke:0.5px #1b1e22;transform:scaleX(0.9876);">Users</span>
<span class="t" style="left:92.17px;top:469.47px;font-size:14px;line-height:21px;color:#1b1e22;-webkit-text-stroke:0.5px #1b1e22;transform:scaleX(1.0057);">Payments</span>
<div class="b" style="left:34.40px;top:505.00px;width:167.30px;height:44.10px;background:#ebf1fd;border-radius:7px;"></div>
<div class="b" style="left:34.40px;top:509.80px;width:3.60px;height:35.00px;background:#2f6fdb;border-radius:3px 0 0 3px;"></div>
<span class="t" style="left:93.06px;top:517.47px;font-size:14px;line-height:21px;color:#3b82f6;-webkit-text-stroke:0.5px #3b82f6;transform:scaleX(1.0191);">Settings</span>
<span class="t" style="left:82.19px;top:573.59px;font-size:16px;line-height:24px;color:#1b1e22;-webkit-text-stroke:0.32px #1b1e22;transform:scaleX(0.9460);">Rule Engine</span>
<span class="t" style="left:80.48px;top:636.39px;font-size:16px;line-height:24px;color:#1b1e22;-webkit-text-stroke:0.32px #1b1e22;transform:scaleX(1.0332);">Reports</span>
<svg class="b" style="left:55.20px;top:157.80px;" width="18.80" height="18.80" viewBox="0 0 20 20"><g fill="none" stroke="#23272e" stroke-width="1.3" stroke-linecap="round" stroke-linejoin="round"><circle cx="10" cy="10" r="8.9" stroke-width="1.75"/><path d="M14.7 6.0 A5.7 5.7 0 1 0 14.9 13.6" stroke-width="1.4"/><path d="M8 7.7 L15.2 9.5 L8 11.6 Z" stroke-width="1.3"/><path d="M8 14.5 H11.6" stroke-width="1.3"/></g></svg>
<svg class="b" style="left:56.20px;top:220.40px;" width="17.40" height="17.60" viewBox="0 0 18 18"><g fill="none" stroke="#3b82f6" stroke-width="1.2" stroke-linecap="round" stroke-linejoin="round"><path d="M0.6 17.3 H17.4"/><path d="M2.6 17.2 V3.2 Q2.6 2.2 3.6 2.2 H14.4 Q15.4 2.2 15.4 3.2 V17.2"/><path d="M5.2 2.2 V0.8 H12.8 V2.2"/><path d="M7 17.2 V13.4 H11 V17.2"/></g><g fill="#3b82f6"><rect x="5.1" y="4.6" width="1.5" height="1.5"/><rect x="8.25" y="4.6" width="1.5" height="1.5"/><rect x="11.4" y="4.6" width="1.5" height="1.5"/><rect x="5.1" y="7.6" width="1.5" height="1.5"/><rect x="8.25" y="7.6" width="1.5" height="1.5"/><rect x="11.4" y="7.6" width="1.5" height="1.5"/><rect x="5.1" y="10.6" width="1.5" height="1.5"/><rect x="8.25" y="10.6" width="1.5" height="1.5"/><rect x="11.4" y="10.6" width="1.5" height="1.5"/></g></svg>
<svg class="b" style="left:57.50px;top:278.00px;" width="16.40" height="16.40" viewBox="0 0 18 18"><g fill="none" stroke="#23272e" stroke-width="1.3" stroke-linecap="round" stroke-linejoin="round"><circle cx="9" cy="9" r="8.2"/><path d="M11.9 6.6 A3.1 3.1 0 1 0 11.9 11.4" stroke-width="1.35"/><path d="M5.6 8.2 H9.6 M5.6 9.9 H9.6" stroke-width="1.05"/></g></svg>
<svg class="b" style="left:57.50px;top:327.60px;" width="16.60" height="14.20" viewBox="0 0 18 15.4"><g fill="none" stroke="#23272e" stroke-width="1.3" stroke-linecap="round" stroke-linejoin="round"><circle cx="7" cy="4.4" r="3.5"/><path d="M0.8 14.6 Q1 9 7 9 Q13 9 13.2 14.6"/><path d="M9.8 1.3 A3.5 3.5 0 1 1 11.4 7.6"/><path d="M13 9.4 Q16.9 10.4 17.2 14.6"/></g></svg>
<svg class="b" style="left:57.90px;top:376.90px;" width="15.20" height="11.20" viewBox="0 0 16 12"><g fill="none" stroke="#23272e" stroke-width="1.3" stroke-linecap="round" stroke-linejoin="round"><rect x="0.65" y="0.65" width="14.7" height="10.7" rx="0.6"/><path d="M3 3.9 H7.2 M3 6 H7.2 M3 8.2 H5.6" stroke-width="1.1"/><rect x="9.6" y="3.4" width="3" height="2.6" stroke-width="1.1"/></g></svg>
<svg class="b" style="left:57.90px;top:422.80px;" width="15.60" height="15.60" viewBox="0 0 16 16"><g fill="none" stroke="#23272e" stroke-width="1.3" stroke-linecap="round" stroke-linejoin="round"><circle cx="8" cy="4.6" r="3.7"/><path d="M0.8 15.4 Q1 9.4 8 9.4 Q15 9.4 15.2 15.4"/></g></svg>
<svg class="b" style="left:58.00px;top:471.00px;" width="16.00" height="16.40" viewBox="0 0 16.4 16.8"><g fill="none" stroke="#23272e" stroke-width="1.3" stroke-linecap="round" stroke-linejoin="round"><rect x="0.65" y="6.4" width="15" height="9.6" rx="0.6"/><circle cx="8.2" cy="11.2" r="1.9"/><path d="M3 11.2 H3.8 M12.6 11.2 H13.4" stroke-width="1.1"/><path d="M5.6 5 Q8 2 11.8 1.4 M9.4 0.8 H12.2 V3.4"/></g></svg>
<svg class="b" style="left:57.90px;top:519.70px;" width="16.20" height="16.20" viewBox="0 0 24 24"><g fill="none" stroke="#3b82f6" stroke-width="2.00" stroke-linecap="round" stroke-linejoin="round"><path d="M10.33 0.92 L13.67 0.92 L14.07 3.65 L16.44 4.63 L18.65 2.99 L21.01 5.35 L19.37 7.56 L20.35 9.93 L23.08 10.33 L23.08 13.67 L20.35 14.07 L19.37 16.44 L21.01 18.65 L18.65 21.01 L16.44 19.37 L14.07 20.35 L13.67 23.08 L10.33 23.08 L9.93 20.35 L7.56 19.37 L5.35 21.01 L2.99 18.65 L4.63 16.44 L3.65 14.07 L0.92 13.67 L0.92 10.33 L3.65 9.93 L4.63 7.56 L2.99 5.35 L5.35 2.99 L7.56 4.63 L9.93 3.65 Z"/><circle cx="12" cy="12" r="3.4"/></g></svg>
<svg class="b" style="left:55.80px;top:575.80px;" width="18.20" height="18.20" viewBox="0 0 24 24"><g fill="none" stroke="#23272e" stroke-width="1.91" stroke-linecap="round" stroke-linejoin="round"><path d="M10.33 0.92 L13.67 0.92 L14.07 3.65 L16.44 4.63 L18.65 2.99 L21.01 5.35 L19.37 7.56 L20.35 9.93 L23.08 10.33 L23.08 13.67 L20.35 14.07 L19.37 16.44 L21.01 18.65 L18.65 21.01 L16.44 19.37 L14.07 20.35 L13.67 23.08 L10.33 23.08 L9.93 20.35 L7.56 19.37 L5.35 21.01 L2.99 18.65 L4.63 16.44 L3.65 14.07 L0.92 13.67 L0.92 10.33 L3.65 9.93 L4.63 7.56 L2.99 5.35 L5.35 2.99 L7.56 4.63 L9.93 3.65 Z"/><circle cx="12" cy="10" r="1.9"/><path d="M8.4 16 Q8.6 12.9 12 12.9 Q15.4 12.9 15.6 16"/></g></svg>
<svg class="b" style="left:55.30px;top:638.30px;" width="16.00" height="18.00" viewBox="0 0 16 18"><g fill="none" stroke="#23272e" stroke-width="1.3" stroke-linecap="round" stroke-linejoin="round"><path d="M1 17 V1.6 Q1 0.8 1.8 0.8 H10 L15 5.6 V17 Z"/><path d="M10 0.8 V5.6 H15"/></g></svg>
<div class="b" style="left:9.00px;top:642.00px;width:213.30px;height:53.70px;background:#ebf1fd;"></div>
<svg class="b" style="left:17.70px;top:654.70px;" width="37.20" height="37.20" viewBox="0 0 40 40"><defs><clipPath id="avc2"><circle cx="20" cy="20" r="20"/></clipPath></defs><circle cx="20" cy="20" r="20" fill="#b4bdd0"/><g clip-path="url(#avc2)" fill="#ebf1fd"><circle cx="20.3" cy="12.2" r="6.4"/><ellipse cx="20.2" cy="27.8" rx="10.5" ry="5.3"/></g></svg>
<span class="t" style="left:69.97px;top:662.29px;font-size:16px;line-height:24px;color:#1b1e22;-webkit-text-stroke:0.32px #1b1e22;transform:scaleX(0.9074);">CR</span>
<svg class="b" style="left:180.50px;top:665.50px;" width="4.00" height="16.00" viewBox="0 0 4 16"><circle cx="2" cy="2.6" r="1.85" fill="#5c6673"/><circle cx="2" cy="8" r="1.85" fill="#5c6673"/><circle cx="2" cy="13.4" r="1.85" fill="#5c6673"/></svg>
<svg class="b" style="left:199.20px;top:665.40px;" width="15.40" height="16.00" viewBox="0 0 15.4 16"><g fill="none" stroke="#23272e" stroke-width="1.3" stroke-linejoin="round" stroke-linecap="round"><path d="M8.6 4.4 V1.4 Q8.6 0.7 7.9 0.7 H1.4 Q0.7 0.7 0.7 1.4 V14.6 Q0.7 15.3 1.4 15.3 H7.9 Q8.6 15.3 8.6 14.6 V11.6"/><path d="M5 8 H14.4 M11.4 5 L14.5 8 L11.4 11"/></g></svg>
<span class="t" style="left:238.47px;top:42.84px;font-size:12px;line-height:18px;color:#22262b;-webkit-text-stroke:0.32px #22262b;transform:scaleX(0.9783);">Organization</span>
<svg class="b" style="left:316.60px;top:44.20px;" width="8.00" height="13.40" viewBox="0 0 8 13.4"><path d="M0.9 0.9 L6.9 6.7 L0.9 12.5" fill="none" stroke="#2f6fdb" stroke-width="1.5" stroke-linecap="round" stroke-linejoin="round"/></svg>
<span class="t" style="left:335.71px;top:42.84px;font-size:12px;line-height:18px;color:#3574d9;-webkit-text-stroke:0.32px #3574d9;transform:scaleX(0.9754);">Categories</span>
<div class="b" style="left:1194.00px;top:34.20px;width:75.60px;height:35.60px;background:#fff;border:1px solid #e1e4ea;border-radius:5px;box-sizing:border-box;"></div>
<svg class="b" style="left:1207.00px;top:43.30px;" width="14.20" height="14.20" viewBox="0 0 14.2 14.2"><g fill="#5c6673"><path d="M7.1 0.2 L13.8 3.2 V4.6 H0.4 V3.2 Z"/><rect x="1.9" y="5.6" width="1.9" height="4.8"/><rect x="6.15" y="5.6" width="1.9" height="4.8"/><rect x="10.4" y="5.6" width="1.9" height="4.8"/><rect x="0.4" y="11.6" width="13.4" height="2.3" rx="0.4"/></g></svg>
<span class="t" style="left:1231.51px;top:42.26px;font-size:13.5px;line-height:20px;color:#1b1e22;-webkit-text-stroke:0.32px #1b1e22;transform:scaleX(0.9721);">SAP</span>
<div class="b" style="left:239.40px;top:77.70px;width:1030.90px;height:609.60px;background:#fff;border-radius:14px;"></div>
<span class="t" style="left:261.52px;top:99.99px;font-size:16px;line-height:24px;color:#5c6673;-webkit-text-stroke:0.12px #5c6673;transform:scaleX(0.9795);">Custom fields</span>
<svg class="b" style="left:364.47px;top:102.57px;" width="17.66" height="17.66" viewBox="-1 -1 18 18"><circle cx="8" cy="8" r="8" fill="#36892a"/><path d="M4.3 8.3 L6.9 10.8 L11.7 5.6" fill="none" stroke="#fff" stroke-width="1.9" stroke-linecap="round" stroke-linejoin="round"/></svg>
<span class="t" style="left:399.83px;top:99.99px;font-size:16px;line-height:24px;color:#5c6673;-webkit-text-stroke:0.12px #5c6673;transform:scaleX(0.9123);">ERP</span>
<svg class="b" style="left:436.47px;top:102.57px;" width="17.66" height="17.66" viewBox="-1 -1 18 18"><circle cx="8" cy="8" r="8" fill="#36892a"/><path d="M4.3 8.3 L6.9 10.8 L11.7 5.6" fill="none" stroke="#fff" stroke-width="1.9" stroke-linecap="round" stroke-linejoin="round"/></svg>
<span class="t" style="left:472.21px;top:99.99px;font-size:16px;line-height:24px;color:#2f6fdb;-webkit-text-stroke:0.12px #2f6fdb;transform:scaleX(0.9259);">MCC</span>
<svg class="b" style="left:513.17px;top:102.57px;" width="17.66" height="17.66" viewBox="-1 -1 18 18"><circle cx="8" cy="8" r="8" fill="#36892a"/><path d="M4.3 8.3 L6.9 10.8 L11.7 5.6" fill="none" stroke="#fff" stroke-width="1.9" stroke-linecap="round" stroke-linejoin="round"/></svg>
<span class="t" style="left:550.01px;top:99.99px;font-size:16px;line-height:24px;color:#5c6673;-webkit-text-stroke:0.12px #5c6673;transform:scaleX(0.9904);">Customization</span>
<svg class="b" style="left:657.37px;top:102.57px;" width="17.66" height="17.66" viewBox="-1 -1 18 18"><circle cx="8" cy="8" r="8" fill="#36892a"/><path d="M4.3 8.3 L6.9 10.8 L11.7 5.6" fill="none" stroke="#fff" stroke-width="1.9" stroke-linecap="round" stroke-linejoin="round"/></svg>
<span class="t" style="left:694.66px;top:99.99px;font-size:16px;line-height:24px;color:#5c6673;-webkit-text-stroke:0.12px #5c6673;transform:scaleX(0.9616);">White Labelling</span>
<svg class="b" style="left:807.17px;top:102.57px;" width="17.66" height="17.66" viewBox="-1 -1 18 18"><circle cx="8" cy="8" r="8" fill="#36892a"/><path d="M4.3 8.3 L6.9 10.8 L11.7 5.6" fill="none" stroke="#fff" stroke-width="1.9" stroke-linecap="round" stroke-linejoin="round"/></svg>
<span class="t" style="left:844.50px;top:99.99px;font-size:16px;line-height:24px;color:#5c6673;-webkit-text-stroke:0.12px #5c6673;transform:scaleX(0.9733);">Accounts</span>
<svg class="b" style="left:916.17px;top:102.57px;" width="17.66" height="17.66" viewBox="-1 -1 18 18"><circle cx="8" cy="8" r="8" fill="#36892a"/><path d="M4.3 8.3 L6.9 10.8 L11.7 5.6" fill="none" stroke="#fff" stroke-width="1.9" stroke-linecap="round" stroke-linejoin="round"/></svg>
<span class="t" style="left:952.49px;top:99.99px;font-size:16px;line-height:24px;color:#5c6673;-webkit-text-stroke:0.12px #5c6673;transform:scaleX(0.9417);">Roles</span>
<svg class="b" style="left:998.77px;top:102.57px;" width="17.66" height="17.66" viewBox="-1 -1 18 18"><circle cx="8" cy="8" r="8" fill="#36892a"/><path d="M4.3 8.3 L6.9 10.8 L11.7 5.6" fill="none" stroke="#fff" stroke-width="1.9" stroke-linecap="round" stroke-linejoin="round"/></svg>
<span class="t" style="left:1033.55px;top:99.99px;font-size:16px;line-height:24px;color:#5c6673;-webkit-text-stroke:0.12px #5c6673;transform:scaleX(0.9737);">Recurring Transactions</span>
<svg class="b" style="left:1201.67px;top:102.57px;" width="17.66" height="17.66" viewBox="-1 -1 18 18"><circle cx="8" cy="8" r="8" fill="#36892a"/><path d="M4.3 8.3 L6.9 10.8 L11.7 5.6" fill="none" stroke="#fff" stroke-width="1.9" stroke-linecap="round" stroke-linejoin="round"/></svg>
<div class="b" style="left:252.00px;top:133.50px;width:1005.30px;height:1.10px;background:#d9dee6;"></div>
<div class="b" style="left:462.70px;top:132.90px;width:77.30px;height:2.00px;background:#2f6fdb;"></div>
<span class="t" style="left:258.54px;top:157.69px;font-size:16px;line-height:24px;color:#4a5260;-webkit-text-stroke:0.32px #4a5260;transform:scaleX(0.9844);">MCC list of</span>
<div class="b" style="left:351.70px;top:151.20px;width:174.50px;height:36.10px;background:#fff;border:1px solid #dfe3e8;border-radius:5px;box-sizing:border-box;"></div>
<div class="b" style="left:361.5px;top:156px;width:127.3px;height:26px;overflow:hidden;"><span class="t" style="left:1.77px;top:1.69px;font-size:16px;line-height:24px;color:#1b1e22;-webkit-text-stroke:0.32px #1b1e22;transform:scaleX(0.9621);">Business&amp;Services</span></div>
<svg class="b" style="left:500.80px;top:166.41px;" width="10.50" height="5.78" viewBox="0 0 10.50 5.78"><path d="M0.7 0.7 L5.25 5.08 L9.80 0.7" fill="none" stroke="#333" stroke-width="1.4" stroke-linecap="round" stroke-linejoin="round"/></svg>
<svg class="b" style="left:533.20px;top:162.00px;" width="13.40" height="13.40" viewBox="0 0 14 14"><circle cx="7" cy="7" r="7" fill="#6b7280"/><rect x="6.1" y="6" width="1.8" height="4.6" fill="#fff"/><circle cx="7" cy="4.1" r="1.05" fill="#fff"/></svg>
<span class="t" style="left:984.99px;top:157.69px;font-size:16px;line-height:24px;color:#1b1e22;-webkit-text-stroke:0.32px #1b1e22;transform:scaleX(0.9454);">MCC Range: 7300-7999...</span>
<span class="t" style="left:1185.29px;top:157.69px;font-size:16px;line-height:24px;color:#1b1e22;-webkit-text-stroke:0.32px #1b1e22;transform:scaleX(0.9793);">Total - 55</span>
<div class="b" style="left:259.40px;top:203.00px;width:990.20px;height:1.00px;background:#e9ecf1;"></div>
<div class="b" style="left:259.40px;top:215.50px;width:267.10px;height:38.80px;background:#fff;border:1px solid #dfe3e8;border-radius:5px;box-sizing:border-box;"></div>
<span class="t" style="left:271.31px;top:223.79px;font-size:16px;line-height:24px;color:#6b7280;-webkit-text-stroke:0.32px #6b7280;transform:scaleX(0.9642);">Search by MCC description</span>
<svg class="b" style="left:500.00px;top:227.20px;" width="15.20" height="15.20" viewBox="0 0 15.2 15.2"><circle cx="5.7" cy="5.7" r="4.5" fill="none" stroke="#666" stroke-width="1.6"/><path d="M9.1 9.1 L13.9 13.9" stroke="#666" stroke-width="2.2" stroke-linecap="round"/></svg>
<div class="b" style="left:536.90px;top:216.80px;width:98.40px;height:36.60px;background:#fff;border:1px solid #dfe3e8;border-radius:5px;box-sizing:border-box;"></div>
<span class="t" style="left:548.11px;top:223.79px;font-size:16px;line-height:24px;color:#1b1e22;-webkit-text-stroke:0.32px #1b1e22;transform:scaleX(1.0057);">Default</span>
<svg class="b" style="left:610.20px;top:232.44px;" width="10.40" height="5.72" viewBox="0 0 10.40 5.72"><path d="M0.7 0.7 L5.20 5.02 L9.70 0.7" fill="none" stroke="#333" stroke-width="1.4" stroke-linecap="round" stroke-linejoin="round"/></svg>
<div class="b" style="left:639.30px;top:215.50px;width:48.40px;height:38.90px;background:#fff;border:1px solid #dfe3e8;border-radius:5px;box-sizing:border-box;"></div>
<svg class="b" style="left:655.90px;top:226.75px;" width="16.20" height="15.50" viewBox="0 0 16.2 15.5"><g fill="none" stroke="#666e7c" stroke-width="1.9" stroke-linecap="round" stroke-linejoin="round"><path d="M3.9 1.1 V13.4 M1.0 10.7 L3.9 14.1 L6.8 10.7"/><path d="M12.3 14.4 V2.1 M9.4 4.8 L12.3 1.4 L15.2 4.8"/></g></svg>
<div class="b" style="left:1053.00px;top:215.50px;width:196.60px;height:38.70px;background:#2f6fdb;border-radius:5px;"></div>
<span class="t" style="left:1077.18px;top:223.69px;font-size:16px;line-height:24px;color:#fff;-webkit-text-stroke:0.5px #fff;transform:scaleX(0.9498);">Request MCC Update</span>
<div class="b" style="left:0;top:0;width:1290px;height:657.5px;overflow:hidden;"><span class="t" style="left:265.85px;top:283.87px;font-size:14px;line-height:21px;color:#5c6673;-webkit-text-stroke:0.32px #5c6673;transform:scaleX(0.9358);">MCC</span>
<svg class="b" style="left:303.20px;top:289.00px;" width="8.40" height="12.00" viewBox="0 0 8.4 12"><path d="M4.2 0.6 L7.9 4.2 H0.5 Z M0.5 7.9 H7.9 L4.2 11.5 Z" fill="#5d6775" stroke="#5d6775" stroke-width="0.6" stroke-linejoin="round"/></svg>
<span class="t" style="left:511.87px;top:283.87px;font-size:14px;line-height:21px;color:#5c6673;-webkit-text-stroke:0.32px #5c6673;transform:scaleX(1.0073);">Description</span>
<span class="t" style="left:1004.97px;top:283.87px;font-size:14px;line-height:21px;color:#5c6673;-webkit-text-stroke:0.32px #5c6673;transform:scaleX(0.9956);">Status</span>
<svg class="b" style="left:1052.00px;top:289.00px;" width="8.40" height="12.00" viewBox="0 0 8.4 12"><path d="M4.2 0.6 L7.9 4.2 H0.5 Z M0.5 7.9 H7.9 L4.2 11.5 Z" fill="#5d6775" stroke="#5d6775" stroke-width="0.6" stroke-linejoin="round"/></svg>
<div class="b" style="left:259.40px;top:311.55px;width:985.30px;height:1.10px;background:#e4e7ee;"></div>
<div class="b" style="left:259.40px;top:351.65px;width:985.30px;height:1.10px;background:#e4e7ee;"></div>
<div class="b" style="left:259.40px;top:391.25px;width:985.30px;height:1.10px;background:#e4e7ee;"></div>
<div class="b" style="left:259.40px;top:431.05px;width:985.30px;height:1.10px;background:#e4e7ee;"></div>
<div class="b" style="left:259.40px;top:470.75px;width:985.30px;height:1.10px;background:#e4e7ee;"></div>
<div class="b" style="left:259.40px;top:510.95px;width:985.30px;height:1.10px;background:#e4e7ee;"></div>
<div class="b" style="left:259.40px;top:550.85px;width:985.30px;height:1.10px;background:#e4e7ee;"></div>
<div class="b" style="left:259.40px;top:590.95px;width:985.30px;height:1.10px;background:#e4e7ee;"></div>
<div class="b" style="left:259.40px;top:630.75px;width:985.30px;height:1.10px;background:#e4e7ee;"></div>
<span class="t" style="left:265.90px;top:321.19px;font-size:16px;line-height:24px;color:#1b1e22;-webkit-text-stroke:0.32px #1b1e22;transform:scaleX(0.9977);">7513</span>
<span class="t" style="left:512.69px;top:321.19px;font-size:16px;line-height:24px;color:#1b1e22;-webkit-text-stroke:0.32px #1b1e22;transform:scaleX(0.9655);">Truck Rental</span>
<div class="b" style="left:1009.50px;top:328.80px;width:7.40px;height:7.40px;background:#36892a;border-radius:50%;"></div>
<span class="t" style="left:1023.60px;top:321.19px;font-size:16px;line-height:24px;color:#1b1e22;-webkit-text-stroke:0.32px #1b1e22;transform:scaleX(0.9795);">Active</span>
<span class="t" style="left:266.02px;top:361.04px;font-size:16px;line-height:24px;color:#1b1e22;-webkit-text-stroke:0.32px #1b1e22;transform:scaleX(0.9942);">8006</span>
<span class="t" style="left:511.77px;top:361.04px;font-size:16px;line-height:24px;color:#1b1e22;-webkit-text-stroke:0.32px #1b1e22;transform:scaleX(0.9639);">MCC update request</span>
<div class="b" style="left:1009.50px;top:368.65px;width:7.40px;height:7.40px;background:#36892a;border-radius:50%;"></div>
<span class="t" style="left:1023.60px;top:361.04px;font-size:16px;line-height:24px;color:#1b1e22;-webkit-text-stroke:0.32px #1b1e22;transform:scaleX(0.9795);">Active</span>
<span class="t" style="left:265.90px;top:400.89px;font-size:16px;line-height:24px;color:#1b1e22;-webkit-text-stroke:0.32px #1b1e22;transform:scaleX(1.0000);">7941</span>
<span class="t" style="left:513.00px;top:400.89px;font-size:16px;line-height:24px;color:#1b1e22;-webkit-text-stroke:0.32px #1b1e22;transform:scaleX(0.9654);">Athletic Fields, Commercial Sp...</span>
<div class="b" style="left:1009.50px;top:408.50px;width:7.40px;height:7.40px;background:#36892a;border-radius:50%;"></div>
<span class="t" style="left:1023.60px;top:400.89px;font-size:16px;line-height:24px;color:#1b1e22;-webkit-text-stroke:0.32px #1b1e22;transform:scaleX(0.9795);">Active</span>
<span class="t" style="left:265.90px;top:440.74px;font-size:16px;line-height:24px;color:#1b1e22;-webkit-text-stroke:0.32px #1b1e22;transform:scaleX(0.9988);">7519</span>
<span class="t" style="left:511.75px;top:440.74px;font-size:16px;line-height:24px;color:#1b1e22;-webkit-text-stroke:0.32px #1b1e22;transform:scaleX(0.9729);">Motor Home and Recreational Ve...</span>
<div class="b" style="left:1009.50px;top:448.35px;width:7.40px;height:7.40px;background:#36892a;border-radius:50%;"></div>
<span class="t" style="left:1023.60px;top:440.74px;font-size:16px;line-height:24px;color:#1b1e22;-webkit-text-stroke:0.32px #1b1e22;transform:scaleX(0.9795);">Active</span>
<span class="t" style="left:265.90px;top:480.59px;font-size:16px;line-height:24px;color:#1b1e22;-webkit-text-stroke:0.32px #1b1e22;transform:scaleX(0.9988);">7929</span>
<span class="t" style="left:511.76px;top:480.59px;font-size:16px;line-height:24px;color:#1b1e22;-webkit-text-stroke:0.32px #1b1e22;transform:scaleX(0.9675);">Bands, Orchestras and Miscella...</span>
<div class="b" style="left:1009.50px;top:488.20px;width:7.40px;height:7.40px;background:#36892a;border-radius:50%;"></div>
<span class="t" style="left:1023.60px;top:480.59px;font-size:16px;line-height:24px;color:#1b1e22;-webkit-text-stroke:0.32px #1b1e22;transform:scaleX(0.9795);">Active</span>
<span class="t" style="left:265.90px;top:520.44px;font-size:16px;line-height:24px;color:#1b1e22;-webkit-text-stroke:0.32px #1b1e22;transform:scaleX(1.0000);">7531</span>
<span class="t" style="left:513.00px;top:520.44px;font-size:16px;line-height:24px;color:#1b1e22;-webkit-text-stroke:0.32px #1b1e22;transform:scaleX(0.9594);">Automotive Body Repair Shops</span>
<div class="b" style="left:1009.50px;top:528.05px;width:7.40px;height:7.40px;background:#36892a;border-radius:50%;"></div>
<span class="t" style="left:1023.60px;top:520.44px;font-size:16px;line-height:24px;color:#1b1e22;-webkit-text-stroke:0.32px #1b1e22;transform:scaleX(0.9795);">Active</span>
<span class="t" style="left:265.90px;top:560.29px;font-size:16px;line-height:24px;color:#1b1e22;-webkit-text-stroke:0.32px #1b1e22;transform:scaleX(1.0000);">7392</span>
<span class="t" style="left:512.23px;top:560.29px;font-size:16px;line-height:24px;color:#1b1e22;-webkit-text-stroke:0.32px #1b1e22;transform:scaleX(0.9682);">Consulting, Management and Pub...</span>
<div class="b" style="left:1009.50px;top:567.90px;width:7.40px;height:7.40px;background:#36892a;border-radius:50%;"></div>
<span class="t" style="left:1023.60px;top:560.29px;font-size:16px;line-height:24px;color:#1b1e22;-webkit-text-stroke:0.32px #1b1e22;transform:scaleX(0.9795);">Active</span>
<span class="t" style="left:265.90px;top:600.14px;font-size:16px;line-height:24px;color:#1b1e22;-webkit-text-stroke:0.32px #1b1e22;transform:scaleX(1.0000);">7801</span>
<span class="t" style="left:512.24px;top:600.14px;font-size:16px;line-height:24px;color:#1b1e22;-webkit-text-stroke:0.32px #1b1e22;transform:scaleX(0.9553);">Government-Licensed Casinos (O...</span>
<div class="b" style="left:1009.50px;top:607.75px;width:7.40px;height:7.40px;background:#36892a;border-radius:50%;"></div>
<span class="t" style="left:1023.60px;top:600.14px;font-size:16px;line-height:24px;color:#1b1e22;-webkit-text-stroke:0.32px #1b1e22;transform:scaleX(0.9795);">Active</span>
<span class="t" style="left:265.90px;top:639.99px;font-size:16px;line-height:24px;color:#1b1e22;-webkit-text-stroke:0.32px #1b1e22;transform:scaleX(0.9953);">7310</span>
<span class="t" style="left:511.73px;top:639.99px;font-size:16px;line-height:24px;color:#1b1e22;-webkit-text-stroke:0.32px #1b1e22;transform:scaleX(0.9896);">New manual input mcc</span>
<div class="b" style="left:1009.50px;top:647.60px;width:7.40px;height:7.40px;background:#36892a;border-radius:50%;"></div>
<span class="t" style="left:1023.60px;top:639.99px;font-size:16px;line-height:24px;color:#1b1e22;-webkit-text-stroke:0.32px #1b1e22;transform:scaleX(0.9795);">Active</span>
<div class="b" style="left:1245.00px;top:276.00px;width:4.60px;height:65.00px;background:#d3d5da;border-radius:2.3px;"></div></div>
<div class="b" style="left:1242.90px;top:567.90px;width:43.00px;height:42.90px;background:#3273d6;border-radius:5px 0 0 5px;"></div>
<svg class="b" style="left:1255.20px;top:579.60px;" width="17.80" height="20.00" viewBox="0 0 18 20.7"><polygon points="9,0 18,5.2 18,15.5 9,20.7 0,15.5 0,5.2" fill="#fff"/><line x1="-2" y1="10.11" x2="20" y2="-2.61" stroke="#3273d6" stroke-width="0.9"/><line x1="-2" y1="14.51" x2="20" y2="1.79" stroke="#3273d6" stroke-width="0.9"/><line x1="-2" y1="18.91" x2="20" y2="6.19" stroke="#3273d6" stroke-width="0.9"/><line x1="-2" y1="23.31" x2="20" y2="10.59" stroke="#3273d6" stroke-width="0.9"/></svg>
</div>
<div class="b" style="left:637.50px;top:924.00px;width:54.00px;height:42.00px;background:#fff;"></div>
<div class="b" style="left:640.00px;top:925.60px;width:48.90px;height:39.30px;background:#fff;border:2px solid #c6d8f6;border-radius:6px;box-sizing:border-box;"></div>
<svg class="b" style="left:656.05px;top:936.92px;" width="17.09" height="16.35" viewBox="0 0 16.2 15.5"><g fill="none" stroke="#666e7c" stroke-width="1.9" stroke-linecap="round" stroke-linejoin="round"><path d="M3.9 1.1 V13.4 M1.0 10.7 L3.9 14.1 L6.8 10.7"/><path d="M12.3 14.4 V2.1 M9.4 4.8 L12.3 1.4 L15.2 4.8"/></g></svg>
<div class="b" style="left:639.10px;top:966.00px;width:204.80px;height:130.80px;background:#fff;border-radius:6px;box-shadow:0 3px 14px rgba(0,0,0,.13);"></div>
<span class="t" style="left:658.88px;top:979.20px;font-size:16.9px;line-height:25px;color:#3273dc;-webkit-text-stroke:0.32px #3273dc;transform:scaleX(0.9790);">Default</span>
<span class="t" style="left:658.89px;top:1019.80px;font-size:16.9px;line-height:25px;color:#1b1e22;-webkit-text-stroke:0.32px #1b1e22;transform:scaleX(0.9672);">New to Old</span>
<span class="t" style="left:659.48px;top:1061.20px;font-size:16.9px;line-height:25px;color:#1b1e22;-webkit-text-stroke:0.32px #1b1e22;transform:scaleX(0.9470);">Old to New</span>
<div class="b" style="left:693.70px;top:914.40px;width:56.20px;height:56.20px;background:#f2b13f;border-radius:50%;"></div><span class="t" style="left:693.70px;top:913.50px;width:56.2px;text-align:center;font-size:33px;line-height:56.2px;color:#000;transform-origin:50% 50%;transform:scaleX(0.95);-webkit-text-stroke:0.45px #000;">3</span>
</div></div>
</body></html>
